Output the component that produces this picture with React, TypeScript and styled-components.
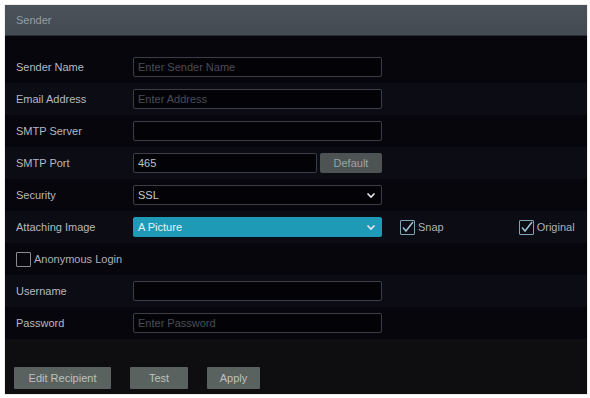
import React, { useState } from "react";
import styled, { createGlobalStyle } from "styled-components";

const GlobalStyle = createGlobalStyle`
  body {
    margin: 0;
    background: #ffffff;
    font-family: "Liberation Sans", Arial, sans-serif;
  }
`;

const Panel = styled.div`
  margin: 5px 3px 4px 5px;
  width: 582px;
  height: 389px;
  display: flex;
  flex-direction: column;
  background: #06060c;
  box-shadow: 0 0 1px #9a9a9a;
`;

const Header = styled.div`
  height: 30px;
  flex: none;
  display: flex;
  align-items: center;
  padding-left: 11px;
  background: linear-gradient(#4b535a, #434a51);
  color: #949da5;
  font-size: 11px;
  border-bottom: 1px solid #2a2e33;
`;

const Form = styled.div`
  padding-top: 15px;
  display: flex;
  flex-direction: column;
`;

const Row = styled.div<{ $alt?: boolean }>`
  height: 32px;
  display: flex;
  align-items: center;
  padding-left: 11px;
  background: ${(p) => (p.$alt ? "#0c0c14" : "transparent")};
`;

const Label = styled.div`
  width: 117px;
  flex: none;
  color: #b6b9c0;
  font-size: 11px;
`;

const Input = styled.div<{ $width?: number }>`
  box-sizing: border-box;
  width: ${(p) => p.$width ?? 249}px;
  height: 20px;
  border: 1px solid #3c3d46;
  border-radius: 2px;
  background: #030307;
  display: flex;
  align-items: center;
  padding: 0 4px;
  font-size: 11px;
  color: #bfc1c7;
`;

const Placeholder = styled.span`
  color: #4a4c56;
`;

const Select = styled.div<{ $active?: boolean }>`
  box-sizing: border-box;
  width: 249px;
  height: 20px;
  border: 1px solid ${(p) => (p.$active ? "#1e9ab7" : "#3c3d46")};
  border-radius: 2px;
  background: ${(p) => (p.$active ? "#1e9ab7" : "#030307")};
  display: flex;
  align-items: center;
  justify-content: space-between;
  padding: 0 5px 0 4px;
  font-size: 11px;
  color: ${(p) => (p.$active ? "#e2f3f8" : "#c8cad0")};
`;

const SmallButton = styled.button`
  box-sizing: border-box;
  width: 62px;
  height: 20px;
  margin-left: 3px;
  border: none;
  border-radius: 2px;
  background: #4d5352;
  color: #9ea3a2;
  font-family: inherit;
  font-size: 11px;
`;

const CheckWrap = styled.label<{ $gap?: number }>`
  display: flex;
  align-items: center;
  gap: 3px;
  margin-left: ${(p) => p.$gap ?? 0}px;
  font-size: 11px;
  color: #aeb2ba;
  cursor: pointer;
`;

const Box = styled.span<{ $checked?: boolean }>`
  box-sizing: border-box;
  width: 15px;
  height: 15px;
  border: 1px solid ${(p) => (p.$checked ? "#7ea4b6" : "#8a8c92")};
  border-radius: 1px;
  display: flex;
  align-items: center;
  justify-content: center;
`;

const Footer = styled.div`
  flex: 1;
  background: #0e0e10;
  display: flex;
  align-items: flex-end;
  gap: 19px;
  padding: 0 0 5px 9px;
`;

const FooterButton = styled.button<{ $width: number }>`
  width: ${(p) => p.$width}px;
  height: 22px;
  border: none;
  border-radius: 1px;
  background: #5a625f;
  color: #bcc1be;
  font-family: inherit;
  font-size: 11px;
`;

const Chevron = () => (
  <svg width="10" height="7" viewBox="0 0 10 7">
    <path d="M1.5 1.5 L5 5 L8.5 1.5" fill="none" stroke="#e6e8ec" strokeWidth="1.6" />
  </svg>
);

const Check = ({ checked }: { checked: boolean }) => (
  <Box $checked={checked}>
    {checked && (
      <svg width="13" height="13" viewBox="0 0 13 13">
        <path d="M2 6.5 L5 10 L12 1" fill="none" stroke="#9ec3d4" strokeWidth="1.5" />
      </svg>
    )}
  </Box>
);

const App = () => {
  const [snap, setSnap] = useState(true);
  const [original, setOriginal] = useState(true);
  const [anonymous, setAnonymous] = useState(false);

  return (
    <>
      <GlobalStyle />
      <Panel>
        <Header>Sender</Header>
        <Form>
          <Row>
            <Label>Sender Name</Label>
            <Input>
              <Placeholder>Enter Sender Name</Placeholder>
            </Input>
          </Row>
          <Row $alt>
            <Label>Email Address</Label>
            <Input>
              <Placeholder>Enter Address</Placeholder>
            </Input>
          </Row>
          <Row>
            <Label>SMTP Server</Label>
            <Input />
          </Row>
          <Row $alt>
            <Label>SMTP Port</Label>
            <Input $width={184}>465</Input>
            <SmallButton>Default</SmallButton>
          </Row>
          <Row>
            <Label>Security</Label>
            <Select>
              SSL
              <Chevron />
            </Select>
          </Row>
          <Row $alt>
            <Label>Attaching Image</Label>
            <Select $active>
              A Picture
              <Chevron />
            </Select>
            <CheckWrap $gap={18} onClick={() => setSnap(!snap)}>
              <Check checked={snap} />
              Snap
            </CheckWrap>
            <CheckWrap $gap={75} onClick={() => setOriginal(!original)}>
              <Check checked={original} />
              Original
            </CheckWrap>
          </Row>
          <Row>
            <CheckWrap onClick={() => setAnonymous(!anonymous)}>
              <Check checked={anonymous} />
              Anonymous Login
            </CheckWrap>
          </Row>
          <Row $alt>
            <Label>Username</Label>
            <Input />
          </Row>
          <Row>
            <Label>Password</Label>
            <Input>
              <Placeholder>Enter Password</Placeholder>
            </Input>
          </Row>
        </Form>
        <Footer>
          <FooterButton $width={97}>Edit Recipient</FooterButton>
          <FooterButton $width={58}>Test</FooterButton>
          <FooterButton $width={53}>Apply</FooterButton>
        </Footer>
      </Panel>
    </>
  );
};

export default App;
